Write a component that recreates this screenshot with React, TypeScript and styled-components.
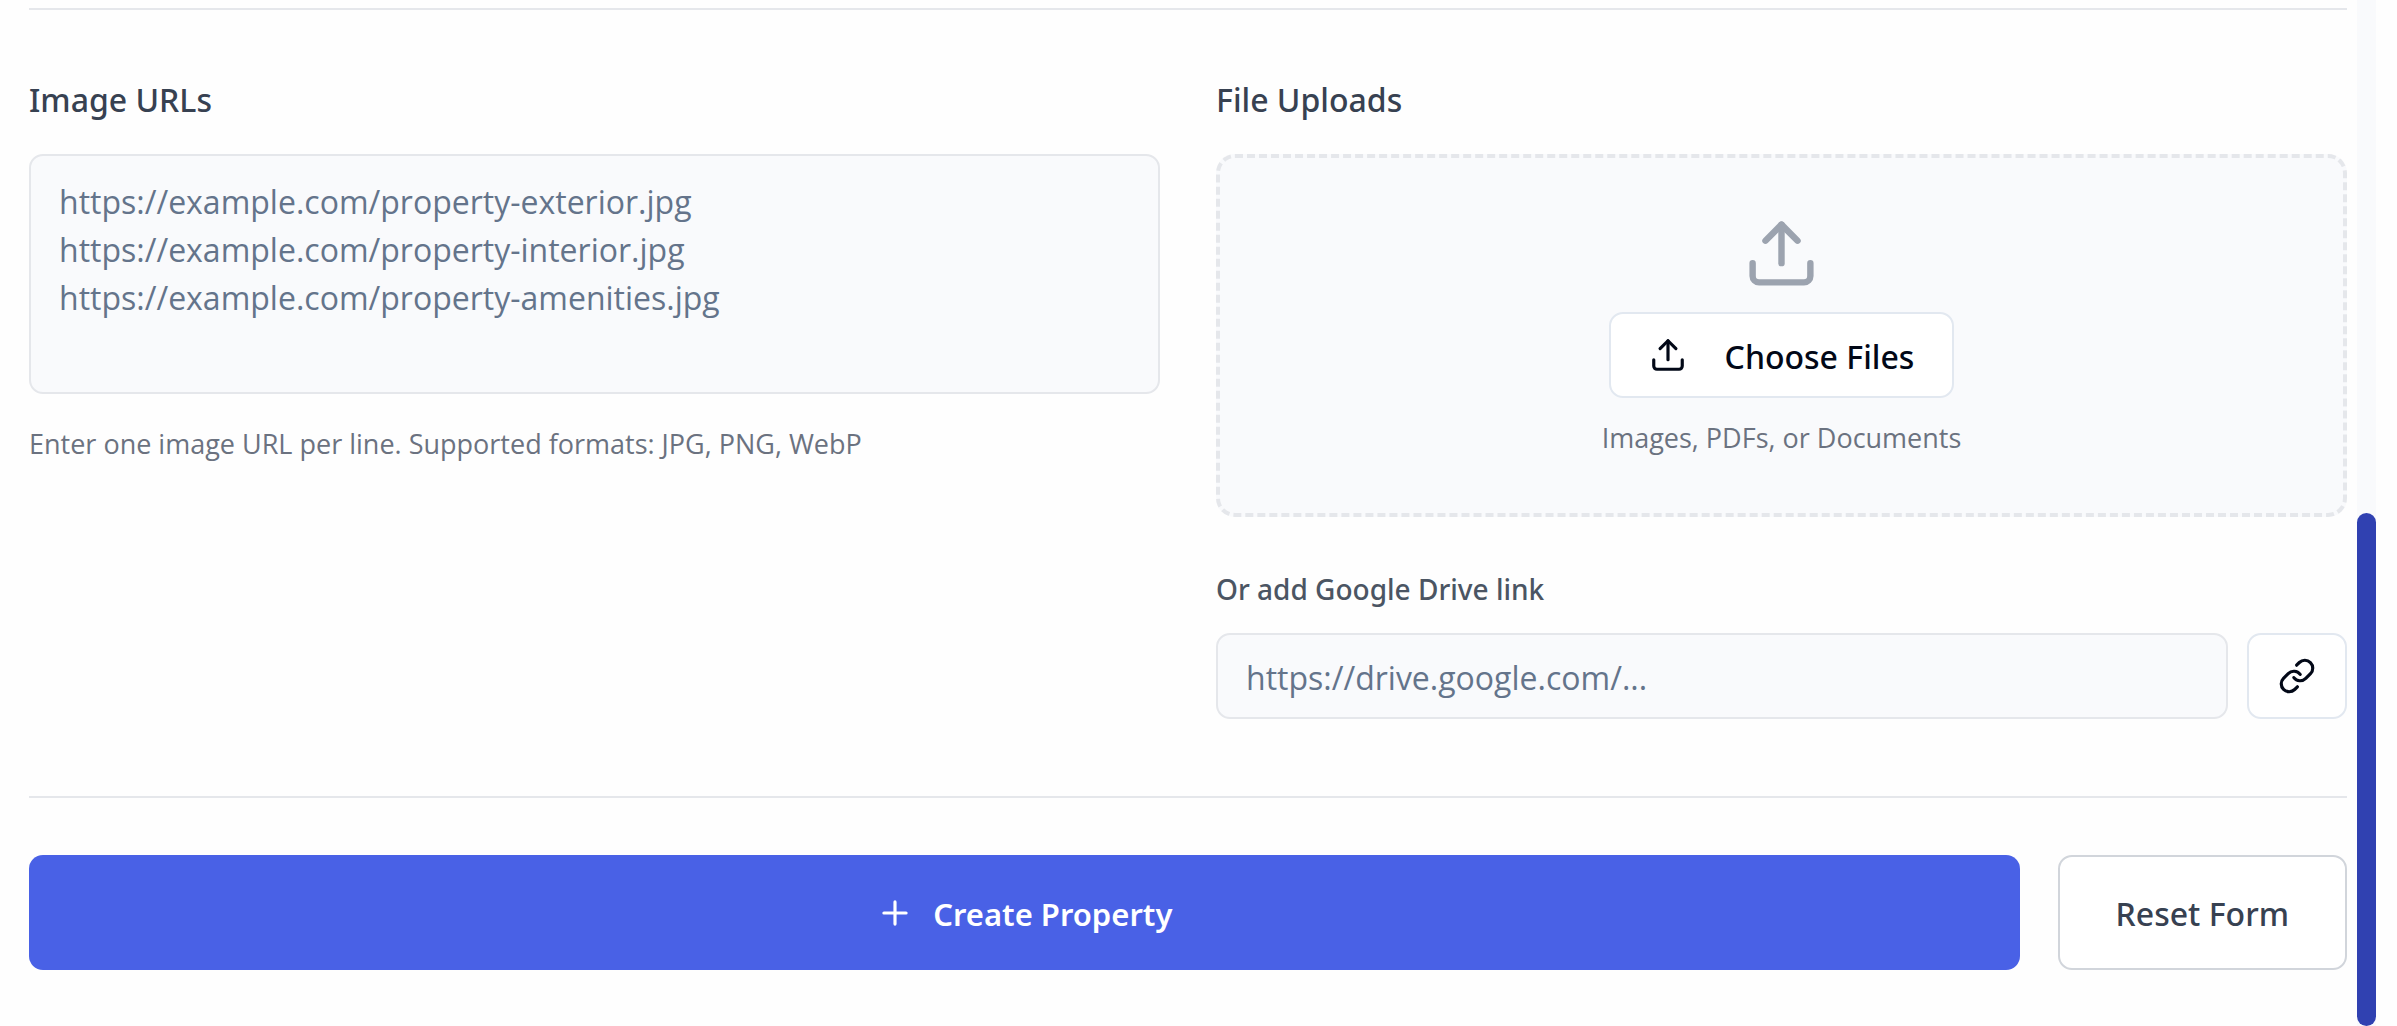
import React, { useRef, useState } from "react";
import styled, { createGlobalStyle } from "styled-components";
import { Link, Plus, Upload } from "lucide-react";

const GlobalStyle = createGlobalStyle`
  *, *::before, *::after {
    box-sizing: border-box;
  }
  body {
    margin: 0;
    background: #fefefe;
    color: #020817;
    font-family: "Open Sans", "Noto Sans", sans-serif;
  }
  button, input, textarea {
    margin: 0;
    font-family: inherit;
  }
`;

const Page = styled.div`
  display: flex;
  min-height: 100vh;
`;

const Form = styled.form`
  flex: 1;
  min-width: 0;
  padding: 8px 10px 56px 29px;
`;

const Media = styled.section`
  display: grid;
  grid-template-columns: repeat(2, minmax(0, 1fr));
  gap: 56px;
  padding: 66px 0 77px;
  border-top: 2px solid #e5e7eb;
`;

const Column = styled.div`
  display: flex;
  flex-direction: column;
`;

const heading = `
  font-family: "Noto Sans", "Open Sans", sans-serif;
  font-weight: 500;
`;

const Label = styled.label`
  ${heading}
  margin-bottom: 30px;
  font-size: 32px;
  line-height: 48px;
  color: #374151;
`;

const SubLabel = styled.label`
  ${heading}
  margin: 53px 0 25px;
  font-size: 28px;
  line-height: 38px;
  color: #4b5563;
`;

const field = `
  width: 100%;
  border: 2px solid #e5e7eb;
  border-radius: 14px;
  background: #f9fafc;
  color: #020817;
  font-size: 32px;
  line-height: 48px;
  outline: none;
  &::placeholder {
    color: #64748b;
    opacity: 1;
  }
`;

const UrlArea = styled.textarea`
  ${field}
  display: block;
  height: 240px;
  padding: 22px 28px;
  resize: none;
`;

const TextInput = styled.input`
  ${field}
  flex: 1;
  min-width: 0;
  height: 86px;
  padding: 3px 28px 0;
`;

const Hint = styled.p`
  margin: 0;
  font-size: 27px;
  line-height: 40px;
  color: #6b7280;
`;

const UrlHint = styled(Hint)`
  margin-top: 30px;
`;

const DropZone = styled.div`
  display: flex;
  flex-direction: column;
  align-items: center;
  gap: 20px;
  padding: 57px 57px 55px;
  border: 4px dashed #e5e7eb;
  border-radius: 19px;
  background: #f9fafc;
`;

const HiddenFile = styled.input`
  display: none;
`;

const Button = styled.button`
  ${heading}
  display: inline-flex;
  align-items: center;
  justify-content: center;
  height: 86px;
  border: 2px solid #e2e8f0;
  border-radius: 14px;
  background: #ffffff;
  color: #020817;
  font-size: 32px;
  line-height: 48px;
  white-space: nowrap;
  cursor: pointer;
`;

const ChooseButton = styled(Button)`
  gap: 38px;
  padding: 0 38px;
`;

const LinkButton = styled(Button)`
  padding: 0 29px;
`;

const CreateButton = styled(Button)`
  flex: 1;
  gap: 19px;
  height: 115px;
  border: 0;
  background: #4961e6;
  color: #ffffff;
  font-size: 31px;
  font-weight: 600;
`;

const ResetButton = styled(Button)`
  height: 115px;
  padding: 0 56px;
  border-color: #d1d5db;
  color: #374151;
`;

const ButtonText = styled.span`
  padding-top: 3px;
`;

const LinkRow = styled.div`
  display: flex;
  gap: 19px;
`;

const Actions = styled.footer`
  display: flex;
  gap: 38px;
  padding-top: 57px;
  border-top: 2px solid #e5e7eb;
`;

const ScrollTrack = styled.div`
  display: flex;
  flex-direction: column;
  justify-content: flex-end;
  width: 19px;
  margin-right: 21px;
  background: #f9fafc;
`;

const ScrollThumb = styled.div`
  height: 50%;
  border-radius: 10px;
  background: #3041b1;
`;

const URL_PLACEHOLDER = [
  "https://example.com/property-exterior.jpg",
  "https://example.com/property-interior.jpg",
  "https://example.com/property-amenities.jpg",
].join("\n");

export default function App() {
  const fileInput = useRef<HTMLInputElement>(null);
  const [urls, setUrls] = useState("");
  const [driveLink, setDriveLink] = useState("");

  const reset = () => {
    setUrls("");
    setDriveLink("");
  };

  return (
    <>
      <GlobalStyle />
      <Page>
        <Form onSubmit={(e) => e.preventDefault()}>
          <Media>
            <Column>
              <Label htmlFor="image-urls">Image URLs</Label>
              <UrlArea
                id="image-urls"
                placeholder={URL_PLACEHOLDER}
                value={urls}
                onChange={(e) => setUrls(e.target.value)}
              />
              <UrlHint>Enter one image URL per line. Supported formats: JPG, PNG, WebP</UrlHint>
            </Column>
            <Column>
              <Label htmlFor="files">File Uploads</Label>
              <DropZone>
                <Upload size={77} color="#9ca3af" aria-hidden />
                <HiddenFile id="files" type="file" multiple ref={fileInput} />
                <ChooseButton type="button" onClick={() => fileInput.current?.click()}>
                  <Upload size={38} aria-hidden />
                  <ButtonText>Choose Files</ButtonText>
                </ChooseButton>
                <Hint>Images, PDFs, or Documents</Hint>
              </DropZone>
              <SubLabel htmlFor="drive-link">Or add Google Drive link</SubLabel>
              <LinkRow>
                <TextInput
                  id="drive-link"
                  type="url"
                  placeholder="https://drive.google.com/..."
                  value={driveLink}
                  onChange={(e) => setDriveLink(e.target.value)}
                />
                <LinkButton type="button" aria-label="Add link">
                  <Link size={38} aria-hidden />
                </LinkButton>
              </LinkRow>
            </Column>
          </Media>
          <Actions>
            <CreateButton type="submit">
              <Plus size={38} aria-hidden />
              <ButtonText>Create Property</ButtonText>
            </CreateButton>
            <ResetButton type="button" onClick={reset}>
              <ButtonText>Reset Form</ButtonText>
            </ResetButton>
          </Actions>
        </Form>
        <ScrollTrack aria-hidden>
          <ScrollThumb />
        </ScrollTrack>
      </Page>
    </>
  );
}
